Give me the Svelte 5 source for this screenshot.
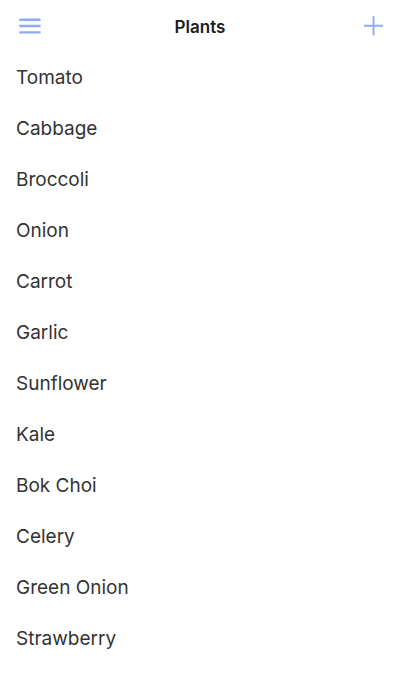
<script>
  const plants = ['Tomato', 'Cabbage', 'Broccoli', 'Onion', 'Carrot', 'Garlic', 'Sunflower', 'Kale', 'Bok Choi', 'Celery', 'Green Onion', 'Strawberry'];
</script>

<main>
  <header>
    <button aria-label="Menu">
      <svg width="28" height="24" viewBox="0 0 28 24"><path d="M3.2 4.7h21.4M3.2 11h21.4M3.2 17.4h21.4" stroke-width="2.4" /></svg>
    </button>
    <h1>Plants</h1>
    <button aria-label="Add plant">
      <svg width="28" height="24" viewBox="0 0 28 24"><path d="M8 10.7h19M17.5 1.2v19" stroke-width="1.9" /></svg>
    </button>
  </header>
  <ul>
    {#each plants as plant}
      <li>{plant}</li>
    {/each}
  </ul>
</main>

<style>
  :global(body) {
    margin: 0;
    background: #fff;
  }
  main {
    font-family: Inter, 'Liberation Sans', sans-serif;
    color: #333;
  }
  header {
    display: flex;
    align-items: center;
    justify-content: space-between;
    box-sizing: border-box;
    height: 52px;
    padding: 2px 16px 0;
  }
  button {
    display: flex;
    padding: 0;
    border: 0;
    background: none;
    cursor: pointer;
  }
  svg {
    display: block;
    fill: none;
    stroke: #8eaaf2;
  }
  h1 {
    margin: 0;
    font-size: 17px;
    line-height: 24px;
    font-weight: 600;
    color: #1c1c1c;
  }
  ul {
    margin: 0;
    padding: 0;
    list-style: none;
  }
  li {
    padding: 0 16px;
    font-size: 19px;
    line-height: 51px;
  }
</style>
